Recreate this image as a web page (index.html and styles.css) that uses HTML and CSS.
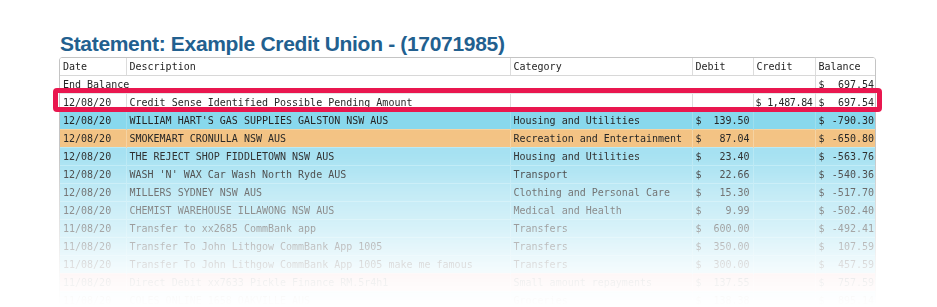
FILE: index.html
```html
<!DOCTYPE html>
<html>
<head>
<meta charset="utf-8">
<link rel="stylesheet" href="styles.css">
</head>
<body>
<div class="page">
  <h1 class="title">Statement: Example Credit Union - (17071985)</h1>
  <div class="statement">
    <div class="table-wrap">
      <table class="tx">
        <colgroup>
          <col class="c-date"><col class="c-desc"><col class="c-cat"><col class="c-debit"><col class="c-credit"><col class="c-bal">
        </colgroup>
        <thead>
          <tr><th>Date</th><th>Description</th><th>Category</th><th>Debit</th><th>Credit</th><th>Balance</th></tr>
        </thead>
        <tbody>
          <tr class="r-white"><td colspan="5">End Balance</td><td><div class="amt"><span>$</span><span>697.54</span></div></td></tr>
          <tr class="r-white"><td>12/08/20</td><td>Credit Sense Identified Possible Pending Amount</td><td></td><td></td><td class="tight"><div class="amt"><span>$</span><span>1,487.84</span></div></td><td><div class="amt"><span>$</span><span>697.54</span></div></td></tr>
          <tr class="r-cyan-strong"><td>12/08/20</td><td>WILLIAM HART'S GAS SUPPLIES GALSTON NSW AUS</td><td>Housing and Utilities</td><td><div class="amt"><span>$</span><span>139.50</span></div></td><td></td><td><div class="amt"><span>$</span><span>-790.30</span></div></td></tr>
          <tr class="r-orange"><td>12/08/20</td><td>SMOKEMART CRONULLA NSW AUS</td><td>Recreation and Entertainment</td><td><div class="amt"><span>$</span><span>87.04</span></div></td><td></td><td><div class="amt"><span>$</span><span>-650.80</span></div></td></tr>
          <tr class="r-cyan"><td>12/08/20</td><td>THE REJECT SHOP FIDDLETOWN NSW AUS</td><td>Housing and Utilities</td><td><div class="amt"><span>$</span><span>23.40</span></div></td><td></td><td><div class="amt"><span>$</span><span>-563.76</span></div></td></tr>
          <tr class="r-cyan"><td>12/08/20</td><td>WASH 'N' WAX Car Wash North Ryde AUS</td><td>Transport</td><td><div class="amt"><span>$</span><span>22.66</span></div></td><td></td><td><div class="amt"><span>$</span><span>-540.36</span></div></td></tr>
          <tr class="r-cyan"><td>12/08/20</td><td>MILLERS SYDNEY NSW AUS</td><td>Clothing and Personal Care</td><td><div class="amt"><span>$</span><span>15.30</span></div></td><td></td><td><div class="amt"><span>$</span><span>-517.70</span></div></td></tr>
          <tr class="r-cyan"><td>12/08/20</td><td>CHEMIST WAREHOUSE ILLAWONG NSW AUS</td><td>Medical and Health</td><td><div class="amt"><span>$</span><span>9.99</span></div></td><td></td><td><div class="amt"><span>$</span><span>-502.40</span></div></td></tr>
          <tr class="r-cyan"><td>11/08/20</td><td>Transfer to xx2685 CommBank app</td><td>Transfers</td><td><div class="amt"><span>$</span><span>600.00</span></div></td><td></td><td><div class="amt"><span>$</span><span>-492.41</span></div></td></tr>
          <tr class="r-cyan"><td>11/08/20</td><td>Transfer To John Lithgow CommBank App 1005</td><td>Transfers</td><td><div class="amt"><span>$</span><span>350.00</span></div></td><td></td><td><div class="amt"><span>$</span><span>107.59</span></div></td></tr>
          <tr class="r-cyan"><td>11/08/20</td><td>Transfer To John Lithgow CommBank App 1005 make me famous</td><td>Transfers</td><td><div class="amt"><span>$</span><span>300.00</span></div></td><td></td><td><div class="amt"><span>$</span><span>457.59</span></div></td></tr>
          <tr class="r-pink"><td>11/08/20</td><td>Direct Debit xx7633 Pickle Finance RM.5r4h1</td><td>Small amount repayments</td><td><div class="amt"><span>$</span><span>137.55</span></div></td><td></td><td><div class="amt"><span>$</span><span>757.59</span></div></td></tr>
          <tr class="r-cyan"><td>11/08/20</td><td>COLES ONLINE 1658 OAKVILLE AUS</td><td>Groceries</td><td><div class="amt"><span>$</span><span>138.38</span></div></td><td></td><td><div class="amt"><span>$</span><span>895.14</span></div></td></tr>
        </tbody>
      </table>
    </div>
    <div class="highlight"></div>
  </div>
</div>
</body>
</html>
```

FILE: styles.css
```css
html, body {
  margin: 0;
  padding: 0;
  background: #ffffff;
}

.page {
  padding: 33px 0 0 59px;
  width: 817px;
}

.title {
  margin: 0 0 3px 1px;
  font-family: "Liberation Sans", Arial, sans-serif;
  font-weight: bold;
  font-size: 21px;
  line-height: 21px;
  color: #22608f;
  letter-spacing: -0.32px;
}

.statement {
  position: relative;
}

.table-wrap {
  border: 1px solid #c4c4c4;
  border-radius: 3px;
  overflow: hidden;
  -webkit-mask-image: linear-gradient(to bottom, #000 0px, #000 80px, rgba(0,0,0,0.95) 98px, rgba(0,0,0,0.82) 116px, rgba(0,0,0,0.66) 134px, rgba(0,0,0,0.54) 152px, rgba(0,0,0,0.44) 170px, rgba(0,0,0,0.3) 188px, rgba(0,0,0,0.17) 206px, rgba(0,0,0,0.07) 224px, rgba(0,0,0,0.02) 242px, rgba(0,0,0,0) 250px);
  mask-image: linear-gradient(to bottom, #000 0px, #000 80px, rgba(0,0,0,0.95) 98px, rgba(0,0,0,0.82) 116px, rgba(0,0,0,0.66) 134px, rgba(0,0,0,0.54) 152px, rgba(0,0,0,0.44) 170px, rgba(0,0,0,0.3) 188px, rgba(0,0,0,0.17) 206px, rgba(0,0,0,0.07) 224px, rgba(0,0,0,0.02) 242px, rgba(0,0,0,0) 250px);
}

.tx {
  width: 100%;
  border-collapse: collapse;
  table-layout: fixed;
  font-family: "DejaVu Sans Mono", "Liberation Mono", monospace;
  font-size: 10px;
  color: #262626;
}

.c-date { width: 66px; }
.c-desc { width: 384px; }
.c-cat { width: 182px; }
.c-debit { width: 61px; }
.c-credit { width: 62px; }
.c-bal { width: 62px; }

.tx th,
.tx td {
  height: 17px;
  padding: 0 3px;
  line-height: 17px;
  text-align: left;
  font-weight: normal;
  white-space: nowrap;
  overflow: hidden;
  border-left: 1px solid #dcdcdc;
  border-top: 1px solid #e6e6e6;
}

.tx th:first-child,
.tx td:first-child {
  border-left: none;
}

.tx thead th {
  border-top: none;
  border-bottom: 1px solid #d8d8d8;
  background: #ffffff;
  color: #1e1e1e;
}

.tx td.tight {
  padding: 0 2px;
  letter-spacing: -0.35px;
}

.amt {
  display: flex;
  justify-content: space-between;
}

.r-white td {
  background: #ffffff;
}

.r-cyan-strong td {
  background: #88d8ed;
  border-left-color: #9ddfef;
  border-top-color: #a4e3f2;
}

.r-cyan td {
  background: #a2e0f1;
  border-left-color: #b4e7f4;
  border-top-color: #b9e9f5;
}

.r-orange td {
  background: #f3c384;
  border-left-color: #f6d3a2;
  border-top-color: #f6d3a2;
}

.r-pink td {
  background: #f6b0b0;
  border-left-color: #f8c4c4;
  border-top-color: #f8c4c4;
}

.highlight {
  position: absolute;
  left: -6px;
  top: 31px;
  width: 819px;
  height: 14px;
  border: 5px solid #e9174f;
  border-radius: 4px;
  pointer-events: none;
}
```
